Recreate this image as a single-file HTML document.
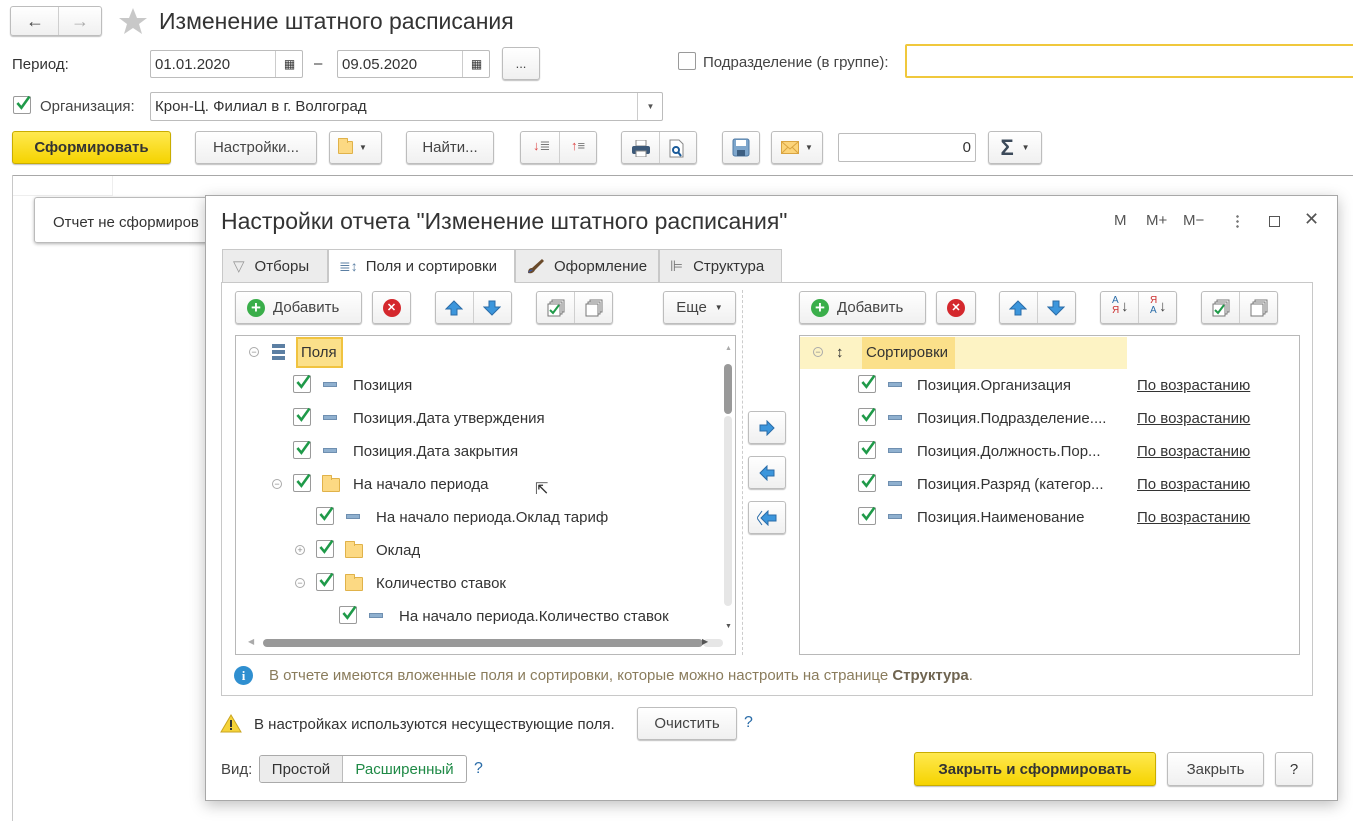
<!DOCTYPE html>
<html><head><meta charset="utf-8"><style>
*{box-sizing:border-box;margin:0;padding:0}
body{width:1353px;height:821px;overflow:hidden;background:#fff;font-family:"Liberation Sans",Arial,sans-serif;font-size:14px;color:#333;position:relative}
.a{position:absolute}
.btn{position:absolute;background:linear-gradient(#fff,#f0f0f0);border:1px solid #bdbdbd;border-radius:3px;box-shadow:0 1px 1px rgba(0,0,0,.25);display:flex;align-items:center;justify-content:center;color:#444}
.yb{background:linear-gradient(#ffe94f,#f5d300);border-color:#c9ad00;font-weight:bold;color:#333}
.inp{position:absolute;border:1px solid #bcbcbc;border-radius:2px;background:#fff;display:flex;align-items:center;padding-left:4px}
.sep{position:absolute;top:0;bottom:0;width:1px;background:#cfcfcf}
.cb{position:absolute;width:18px;height:18px;border:1px solid #9a9a9a;border-radius:2px;background:#fff}
.cb svg{position:absolute;left:1px;top:-3px}
.dash{position:absolute;width:14px;height:5px;background:#8fb0cf;border:1px solid #6f8fb0}
.fold{position:absolute;width:18px;height:14px;background:#fcd983;border:1px solid #e0b24a;border-radius:1px}
.fold:before{content:"";position:absolute;left:-1px;top:-4px;width:8px;height:4px;background:#fcd983;border:1px solid #e0b24a;border-bottom:none;border-radius:1px 1px 0 0}
.tx{position:absolute;font-size:15px;color:#333;white-space:nowrap}
.circ{position:absolute;width:10px;height:10px;border:1px solid #aaa;border-radius:50%;font-size:9px;line-height:8px;text-align:center;color:#888}
.lnk{position:absolute;font-size:15px;text-decoration:underline;color:#333}
.tab{position:absolute;top:249px;height:34px;border:1px solid #c8c8c8;background:#ececec;display:flex;align-items:center;font-size:15px;color:#333}
</style></head><body>
<svg width="0" height="0" style="position:absolute"><defs><symbol id="ck" viewBox="0 0 20 20"><path d="M3 10 L8 16 L18 2" fill="none" stroke="#1f9a49" stroke-width="3.2"/></symbol></defs></svg>

<div class="btn" style="left:10px;top:6px;width:92px;height:30px"><span style="position:absolute;left:15px;top:4px;font-size:18px;color:#444">&#x2190;</span><div class="sep" style="left:47px"></div><span style="position:absolute;left:60px;top:4px;font-size:18px;color:#aaa">&#x2192;</span></div>
<svg class="a" style="left:118px;top:7px" width="30" height="28" viewBox="0 0 30 28"><path d="M15 1 L19 11 L29 11 L21 17 L24 27 L15 21 L6 27 L9 17 L1 11 L11 11Z" fill="#c8c8c8"/></svg>
<div class="a" style="left:159px;top:8px;font-size:23px;color:#333">Изменение штатного расписания</div>

<div class="a" style="left:12px;top:56px;font-size:15px">Период:</div>
<div class="inp" style="left:150px;top:50px;width:153px;height:28px;font-size:15px">01.01.2020<div style="position:absolute;left:124px;top:0;bottom:0;border-left:1px solid #ccc;width:28px;text-align:center;line-height:26px;font-size:12px">&#x25A6;</div></div>
<div class="a" style="left:314px;top:55px;font-size:15px">–</div>
<div class="inp" style="left:337px;top:50px;width:153px;height:28px;font-size:15px">09.05.2020<div style="position:absolute;left:124px;top:0;bottom:0;border-left:1px solid #ccc;width:28px;text-align:center;line-height:26px;font-size:12px">&#x25A6;</div></div>
<div class="btn" style="left:502px;top:47px;width:38px;height:33px;font-size:13px">...</div>
<div class="cb" style="left:678px;top:52px"></div>
<div class="a" style="left:703px;top:54px;font-size:15px;color:#444">Подразделение (в группе):</div>
<div class="a" style="left:905px;top:44px;width:460px;height:34px;border:2px solid #f0c83c;border-radius:2px"></div>

<div class="cb" style="left:13px;top:96px"><svg width="16" height="18"><use href="#ck"/></svg></div>
<div class="a" style="left:40px;top:98px;font-size:15px;color:#444">Организация:</div>
<div class="inp" style="left:150px;top:92px;width:513px;height:29px;font-size:15px">Крон-Ц. Филиал в г. Волгоград<div style="position:absolute;left:486px;top:0;bottom:0;border-left:1px solid #ccc;width:26px;text-align:center;line-height:27px;font-size:8px;color:#555">&#x25BC;</div></div>

<div class="btn yb" style="left:12px;top:131px;width:159px;height:33px;font-size:15px">Сформировать</div>
<div class="btn" style="left:195px;top:131px;width:122px;height:33px;font-size:15px">Настройки...</div>
<div class="btn" style="left:329px;top:131px;width:53px;height:33px"><div class="fold" style="position:relative;left:-6px;width:15px;height:13px"></div><span style="font-size:8px;margin-left:0">&#x25BC;</span></div>
<div class="btn" style="left:406px;top:131px;width:88px;height:33px;font-size:15px">Найти...</div>
<div class="btn" style="left:520px;top:131px;width:77px;height:33px"><div class="sep" style="left:38px"></div><span class="a" style="left:12px;top:6px;font-size:13px;color:#777"><span style="color:#d44">↓</span>≣</span><span class="a" style="left:50px;top:6px;font-size:13px;color:#777"><span style="color:#d44">↑</span>≡</span></div>
<div class="btn" style="left:621px;top:131px;width:76px;height:33px"><div class="sep" style="left:37px"></div><svg class="a" style="left:9px;top:8px" width="20" height="17"><rect x="5" y="0" width="10" height="6" fill="#fff" stroke="#888"/><rect x="1" y="6" width="18" height="8" rx="2" fill="#3b5878"/><rect x="5" y="11" width="10" height="6" fill="#fff" stroke="#888"/></svg><svg class="a" style="left:47px;top:7px" width="16" height="19"><path d="M1 1H10L14 5V18H1Z" fill="#fff" stroke="#888"/><circle cx="7" cy="11" r="3" fill="none" stroke="#1a5b9a" stroke-width="2"/><path d="M9 13L12 17" stroke="#1a5b9a" stroke-width="2"/></svg></div>
<div class="btn" style="left:722px;top:131px;width:38px;height:33px"><svg width="18" height="19"><rect x="1" y="1" width="16" height="17" rx="2" fill="#7ea6cc" stroke="#4f7aa5"/><rect x="4" y="2" width="10" height="6" fill="#fff"/><rect x="5" y="12" width="8" height="6" fill="#3d5f82"/></svg></div>
<div class="btn" style="left:771px;top:131px;width:52px;height:33px"><svg width="18" height="13" style="margin-right:6px"><rect x="0.5" y="0.5" width="17" height="12" fill="#fcd47a" stroke="#d9a441"/><path d="M1 1L9 8L17 1M1 12L7 6M17 12L11 6" fill="none" stroke="#d9a441"/></svg><span style="font-size:8px">&#x25BC;</span></div>
<div class="inp" style="left:838px;top:133px;width:138px;height:29px;justify-content:flex-end;padding-right:4px;font-size:15px">0</div>
<div class="btn" style="left:988px;top:131px;width:54px;height:33px"><span style="font-size:22px;font-weight:bold;color:#3c4a5a;margin-right:8px">Σ</span><span style="font-size:8px">&#x25BC;</span></div>

<div class="a" style="left:12px;top:175px;width:1341px;height:1px;background:#a8a8a8"></div>
<div class="a" style="left:12px;top:175px;width:1px;height:646px;background:#c8c8c8"></div>
<div class="a" style="left:13px;top:176px;width:100px;height:20px;border-right:1px solid #eee;border-bottom:1px solid #eee"></div>
<div class="a" style="left:34px;top:197px;width:200px;height:46px;border:1px solid #bbb;border-radius:3px;box-shadow:0 1px 3px rgba(0,0,0,.3);padding:16px 0 0 18px;font-size:15px">Отчет не сформиров</div>

<div class="a" style="left:205px;top:195px;width:1133px;height:606px;background:#fff;border:1px solid #a8a8a8;box-shadow:0 4px 14px rgba(0,0,0,.25)"></div>
<div class="a" style="left:221px;top:208px;font-size:23px;color:#333">Настройки отчета "Изменение штатного расписания"</div>
<div class="a" style="left:1114px;top:212px;font-size:15px;color:#555">M</div>
<div class="a" style="left:1146px;top:212px;font-size:15px;color:#555">M+</div>
<div class="a" style="left:1183px;top:212px;font-size:15px;color:#555">M−</div>
<div class="a" style="left:1236px;top:214px;width:3px;height:14px;background:radial-gradient(circle,#777 1.2px,transparent 1.4px) 0 0/3px 5px"></div>
<div class="a" style="left:1269px;top:216px;width:11px;height:11px;border:1px solid #555"></div>
<div class="a" style="left:1304px;top:209px;font-size:18px;color:#555">✕</div>

<div class="tab" style="left:222px;width:106px;padding-left:10px"><span style="color:#999;margin-right:10px">&#x25BD;</span>Отборы</div>
<div class="tab" style="left:328px;width:187px;background:#fff;border-bottom-color:#fff;padding-left:10px;z-index:2"><span style="color:#5b7fa3;margin-right:8px;font-size:14px">≣↕</span>Поля и сортировки</div>
<div class="tab" style="left:515px;width:144px;padding-left:10px"><svg width="20" height="18" style="margin-right:8px"><path d="M2 16C2 12 4 11 6 11L16 2L18 4L9 13C8 15 6 17 2 16Z" fill="#6a4a2a"/><path d="M2 16C3 13 5 12 7 13" fill="#3a5aa8"/></svg>Оформление</div>
<div class="tab" style="left:659px;width:123px;padding-left:10px"><span style="color:#777;margin-right:10px">⊫</span>Структура</div>
<div class="a" style="left:221px;top:282px;width:1092px;height:414px;border:1px solid #c8c8c8"></div>

<div class="btn" style="left:235px;top:291px;width:127px;height:33px;font-size:15px;justify-content:flex-start;padding-left:11px"><span style="width:18px;height:18px;border-radius:50%;background:#3aae4a;color:#fff;font-weight:bold;font-size:17px;line-height:17px;text-align:center;margin-right:8px">+</span>Добавить</div>
<div class="btn" style="left:372px;top:291px;width:39px;height:33px"><span style="width:18px;height:18px;border-radius:50%;background:#d4282d;color:#fff;font-size:11px;line-height:18px;text-align:center;font-weight:bold">✕</span></div>
<div class="btn" style="left:435px;top:291px;width:77px;height:33px"><div class="sep" style="left:37px"></div><svg class="a" style="left:9px;top:8px" width="18" height="16"><path d="M9 1L17 9H12V15H6V9H1Z" fill="#3c96dc" stroke="#2a6ca8"/></svg><svg class="a" style="left:47px;top:8px" width="18" height="16"><path d="M9 15L17 7H12V1H6V7H1Z" fill="#3c96dc" stroke="#2a6ca8"/></svg></div>
<div class="btn" style="left:536px;top:291px;width:77px;height:33px"><div class="sep" style="left:37px"></div><svg class="a" style="left:10px;top:7px" width="18" height="18"><rect x="5" y="1" width="12" height="12" fill="#fff" stroke="#777"/><rect x="3" y="3" width="12" height="12" fill="#fff" stroke="#777"/><rect x="1" y="5" width="12" height="12" fill="#fff" stroke="#777"/><path d="M3 11L6 14L12 6" fill="none" stroke="#1f9a49" stroke-width="2"/></svg><svg class="a" style="left:48px;top:7px" width="18" height="18"><rect x="5" y="1" width="12" height="12" fill="#fff" stroke="#777"/><rect x="3" y="3" width="12" height="12" fill="#fff" stroke="#777"/><rect x="1" y="5" width="12" height="12" fill="#fff" stroke="#777"/></svg></div>
<div class="btn" style="left:663px;top:291px;width:73px;height:33px;font-size:15px">Еще <span style="font-size:8px;margin-left:8px">&#x25BC;</span></div>

<div class="a" style="left:235px;top:335px;width:501px;height:320px;border:1px solid #b8b8b8;overflow:hidden">
 <div class="a" style="left:488px;top:28px;width:8px;height:50px;background:#999;border-radius:4px"></div>
 <div class="a" style="left:488px;top:80px;width:8px;height:190px;background:#e6e6e6;border-radius:4px"></div>
 <div class="a" style="left:489px;top:9px;font-size:7px;color:#aaa">▲</div>
 <div class="a" style="left:489px;top:287px;font-size:7px;color:#555">▼</div>
 <div class="a" style="left:27px;top:303px;width:440px;height:8px;background:#999;border-radius:4px"></div>
 <div class="a" style="left:467px;top:303px;width:20px;height:8px;background:#e6e6e6;border-radius:4px"></div>
 <div class="a" style="left:12px;top:301px;font-size:8px;color:#aaa">◀</div>
 <div class="a" style="left:466px;top:301px;font-size:8px;color:#555">▶</div>
</div>
<div class="circ" style="left:249px;top:347px">−</div>
<div class="a" style="left:272px;top:344px;width:13px;height:17px;background:repeating-linear-gradient(#5c7fa3 0 4px,transparent 4px 6px)"></div>
<div class="a" style="left:296px;top:337px;width:47px;height:31px;background:#fbe08a;border:2px solid #f0c340"></div>
<div class="tx" style="left:301px;top:344px">Поля</div>

<div class="cb" style="left:293px;top:375px"><svg width="16" height="18"><use href="#ck"/></svg></div><div class="dash" style="left:323px;top:382px"></div><div class="tx" style="left:353px;top:377px">Позиция</div>
<div class="cb" style="left:293px;top:408px"><svg width="16" height="18"><use href="#ck"/></svg></div><div class="dash" style="left:323px;top:415px"></div><div class="tx" style="left:353px;top:410px">Позиция.Дата утверждения</div>
<div class="cb" style="left:293px;top:441px"><svg width="16" height="18"><use href="#ck"/></svg></div><div class="dash" style="left:323px;top:448px"></div><div class="tx" style="left:353px;top:443px">Позиция.Дата закрытия</div>
<div class="circ" style="left:272px;top:479px">−</div><div class="cb" style="left:293px;top:474px"><svg width="16" height="18"><use href="#ck"/></svg></div><div class="fold" style="left:322px;top:478px"></div><div class="tx" style="left:353px;top:476px">На начало периода</div>
<div class="a" style="left:535px;top:479px;font-size:16px;color:#333">⇱</div>
<div class="cb" style="left:316px;top:507px"><svg width="16" height="18"><use href="#ck"/></svg></div><div class="dash" style="left:346px;top:514px"></div><div class="tx" style="left:376px;top:509px">На начало периода.Оклад тариф</div>
<div class="circ" style="left:295px;top:545px">+</div><div class="cb" style="left:316px;top:540px"><svg width="16" height="18"><use href="#ck"/></svg></div><div class="fold" style="left:345px;top:544px"></div><div class="tx" style="left:376px;top:542px">Оклад</div>
<div class="circ" style="left:295px;top:578px">−</div><div class="cb" style="left:316px;top:573px"><svg width="16" height="18"><use href="#ck"/></svg></div><div class="fold" style="left:345px;top:577px"></div><div class="tx" style="left:376px;top:575px">Количество ставок</div>
<div class="cb" style="left:339px;top:606px"><svg width="16" height="18"><use href="#ck"/></svg></div><div class="dash" style="left:369px;top:613px"></div><div class="tx" style="left:399px;top:608px">На начало периода.Количество ставок</div>

<div class="a" style="left:742px;top:290px;height:365px;border-left:1px dashed #ccc"></div>
<div class="btn" style="left:748px;top:411px;width:38px;height:33px"><svg width="16" height="16"><path d="M1 5H8V1L15 8L8 15V11H1Z" fill="#3c96dc" stroke="#2a6ca8"/></svg></div>
<div class="btn" style="left:748px;top:456px;width:38px;height:33px"><svg width="16" height="16"><path d="M15 5H8V1L1 8L8 15V11H15Z" fill="#3c96dc" stroke="#2a6ca8"/></svg></div>
<div class="btn" style="left:748px;top:501px;width:38px;height:33px"><svg width="20" height="16"><path d="M5 1L0 8L5 15" fill="none" stroke="#2a6ca8"/><path d="M19 5H11V1L4 8L11 15V11H19Z" fill="#3c96dc" stroke="#2a6ca8"/></svg></div>

<div class="btn" style="left:799px;top:291px;width:127px;height:33px;font-size:15px;justify-content:flex-start;padding-left:11px"><span style="width:18px;height:18px;border-radius:50%;background:#3aae4a;color:#fff;font-weight:bold;font-size:17px;line-height:17px;text-align:center;margin-right:8px">+</span>Добавить</div>
<div class="btn" style="left:936px;top:291px;width:40px;height:33px"><span style="width:18px;height:18px;border-radius:50%;background:#d4282d;color:#fff;font-size:11px;line-height:18px;text-align:center;font-weight:bold">✕</span></div>
<div class="btn" style="left:999px;top:291px;width:77px;height:33px"><div class="sep" style="left:37px"></div><svg class="a" style="left:9px;top:8px" width="18" height="16"><path d="M9 1L17 9H12V15H6V9H1Z" fill="#3c96dc" stroke="#2a6ca8"/></svg><svg class="a" style="left:47px;top:8px" width="18" height="16"><path d="M9 15L17 7H12V1H6V7H1Z" fill="#3c96dc" stroke="#2a6ca8"/></svg></div>
<div class="btn" style="left:1100px;top:291px;width:77px;height:33px"><div class="sep" style="left:37px"></div><div class="a" style="left:11px;top:4px;font-size:10px;line-height:10px;color:#2a6ca8">A<br><span style="color:#c33">Я</span></div><div class="a" style="left:20px;top:6px;font-size:15px">↓</div><div class="a" style="left:49px;top:4px;font-size:10px;line-height:10px;color:#c33">Я<br><span style="color:#2a6ca8">A</span></div><div class="a" style="left:58px;top:6px;font-size:15px">↓</div></div>
<div class="btn" style="left:1201px;top:291px;width:77px;height:33px"><div class="sep" style="left:37px"></div><svg class="a" style="left:10px;top:7px" width="18" height="18"><rect x="5" y="1" width="12" height="12" fill="#fff" stroke="#777"/><rect x="3" y="3" width="12" height="12" fill="#fff" stroke="#777"/><rect x="1" y="5" width="12" height="12" fill="#fff" stroke="#777"/><path d="M3 11L6 14L12 6" fill="none" stroke="#1f9a49" stroke-width="2"/></svg><svg class="a" style="left:48px;top:7px" width="18" height="18"><rect x="5" y="1" width="12" height="12" fill="#fff" stroke="#777"/><rect x="3" y="3" width="12" height="12" fill="#fff" stroke="#777"/><rect x="1" y="5" width="12" height="12" fill="#fff" stroke="#777"/></svg></div>

<div class="a" style="left:799px;top:335px;width:501px;height:320px;border:1px solid #b8b8b8"></div>
<div class="a" style="left:800px;top:337px;width:327px;height:32px;background:#fdf3c4"></div>
<div class="a" style="left:862px;top:337px;width:93px;height:32px;background:#fbe08a"></div>
<div class="circ" style="left:813px;top:347px">−</div>
<div class="a" style="left:836px;top:344px;font-size:15px;color:#333">↕</div>
<div class="tx" style="left:866px;top:344px">Сортировки</div>
<div class="cb" style="left:858px;top:375px"><svg width="16" height="18"><use href="#ck"/></svg></div><div class="dash" style="left:888px;top:382px"></div><div class="tx" style="left:917px;top:377px">Позиция.Организация</div><div class="lnk" style="left:1137px;top:377px">По возрастанию</div>
<div class="cb" style="left:858px;top:408px"><svg width="16" height="18"><use href="#ck"/></svg></div><div class="dash" style="left:888px;top:415px"></div><div class="tx" style="left:917px;top:410px">Позиция.Подразделение....</div><div class="lnk" style="left:1137px;top:410px">По возрастанию</div>
<div class="cb" style="left:858px;top:441px"><svg width="16" height="18"><use href="#ck"/></svg></div><div class="dash" style="left:888px;top:448px"></div><div class="tx" style="left:917px;top:443px">Позиция.Должность.Пор...</div><div class="lnk" style="left:1137px;top:443px">По возрастанию</div>
<div class="cb" style="left:858px;top:474px"><svg width="16" height="18"><use href="#ck"/></svg></div><div class="dash" style="left:888px;top:481px"></div><div class="tx" style="left:917px;top:476px">Позиция.Разряд (категор...</div><div class="lnk" style="left:1137px;top:476px">По возрастанию</div>
<div class="cb" style="left:858px;top:507px"><svg width="16" height="18"><use href="#ck"/></svg></div><div class="dash" style="left:888px;top:514px"></div><div class="tx" style="left:917px;top:509px">Позиция.Наименование</div><div class="lnk" style="left:1137px;top:509px">По возрастанию</div>

<div class="a" style="left:234px;top:666px;width:19px;height:19px;border-radius:50%;background:#2f8fd0;color:#fff;font-weight:bold;font-size:13px;text-align:center;line-height:19px;font-family:'Liberation Serif',serif">i</div>
<div class="a" style="left:269px;top:667px;font-size:15px;color:#8a7c5c">В отчете имеются вложенные поля и сортировки, которые можно настроить на странице <b style="color:#6f6450">Структура</b>.</div>

<svg class="a" style="left:220px;top:714px" width="22" height="19"><path d="M11 1L21 18H1Z" fill="#f5d33a" stroke="#caa520"/><rect x="10" y="6" width="2" height="7" fill="#333"/><rect x="10" y="14" width="2" height="2" fill="#333"/></svg>
<div class="a" style="left:254px;top:716px;font-size:15px">В настройках используются несуществующие поля.</div>
<div class="btn" style="left:637px;top:707px;width:100px;height:33px;font-size:15px">Очистить</div>
<div class="a" style="left:744px;top:714px;font-size:16px;color:#2a6ca8">?</div>

<div class="a" style="left:221px;top:761px;font-size:15px;color:#444">Вид:</div>
<div class="a" style="left:259px;top:755px;width:208px;height:28px;border:1px solid #aaa;border-radius:3px;overflow:hidden;display:flex;font-size:15px">
 <div style="width:83px;background:#ececec;border-right:1px solid #bbb;display:flex;align-items:center;justify-content:center">Простой</div>
 <div style="flex:1;display:flex;align-items:center;justify-content:center;color:#1f8a46">Расширенный</div>
</div>
<div class="a" style="left:474px;top:760px;font-size:16px;color:#2a6ca8">?</div>

<div class="btn yb" style="left:914px;top:752px;width:242px;height:34px;font-size:15px">Закрыть и сформировать</div>
<div class="btn" style="left:1167px;top:752px;width:97px;height:34px;font-size:15px">Закрыть</div>
<div class="btn" style="left:1275px;top:752px;width:38px;height:34px;font-size:15px;color:#333">?</div>
</body></html>
